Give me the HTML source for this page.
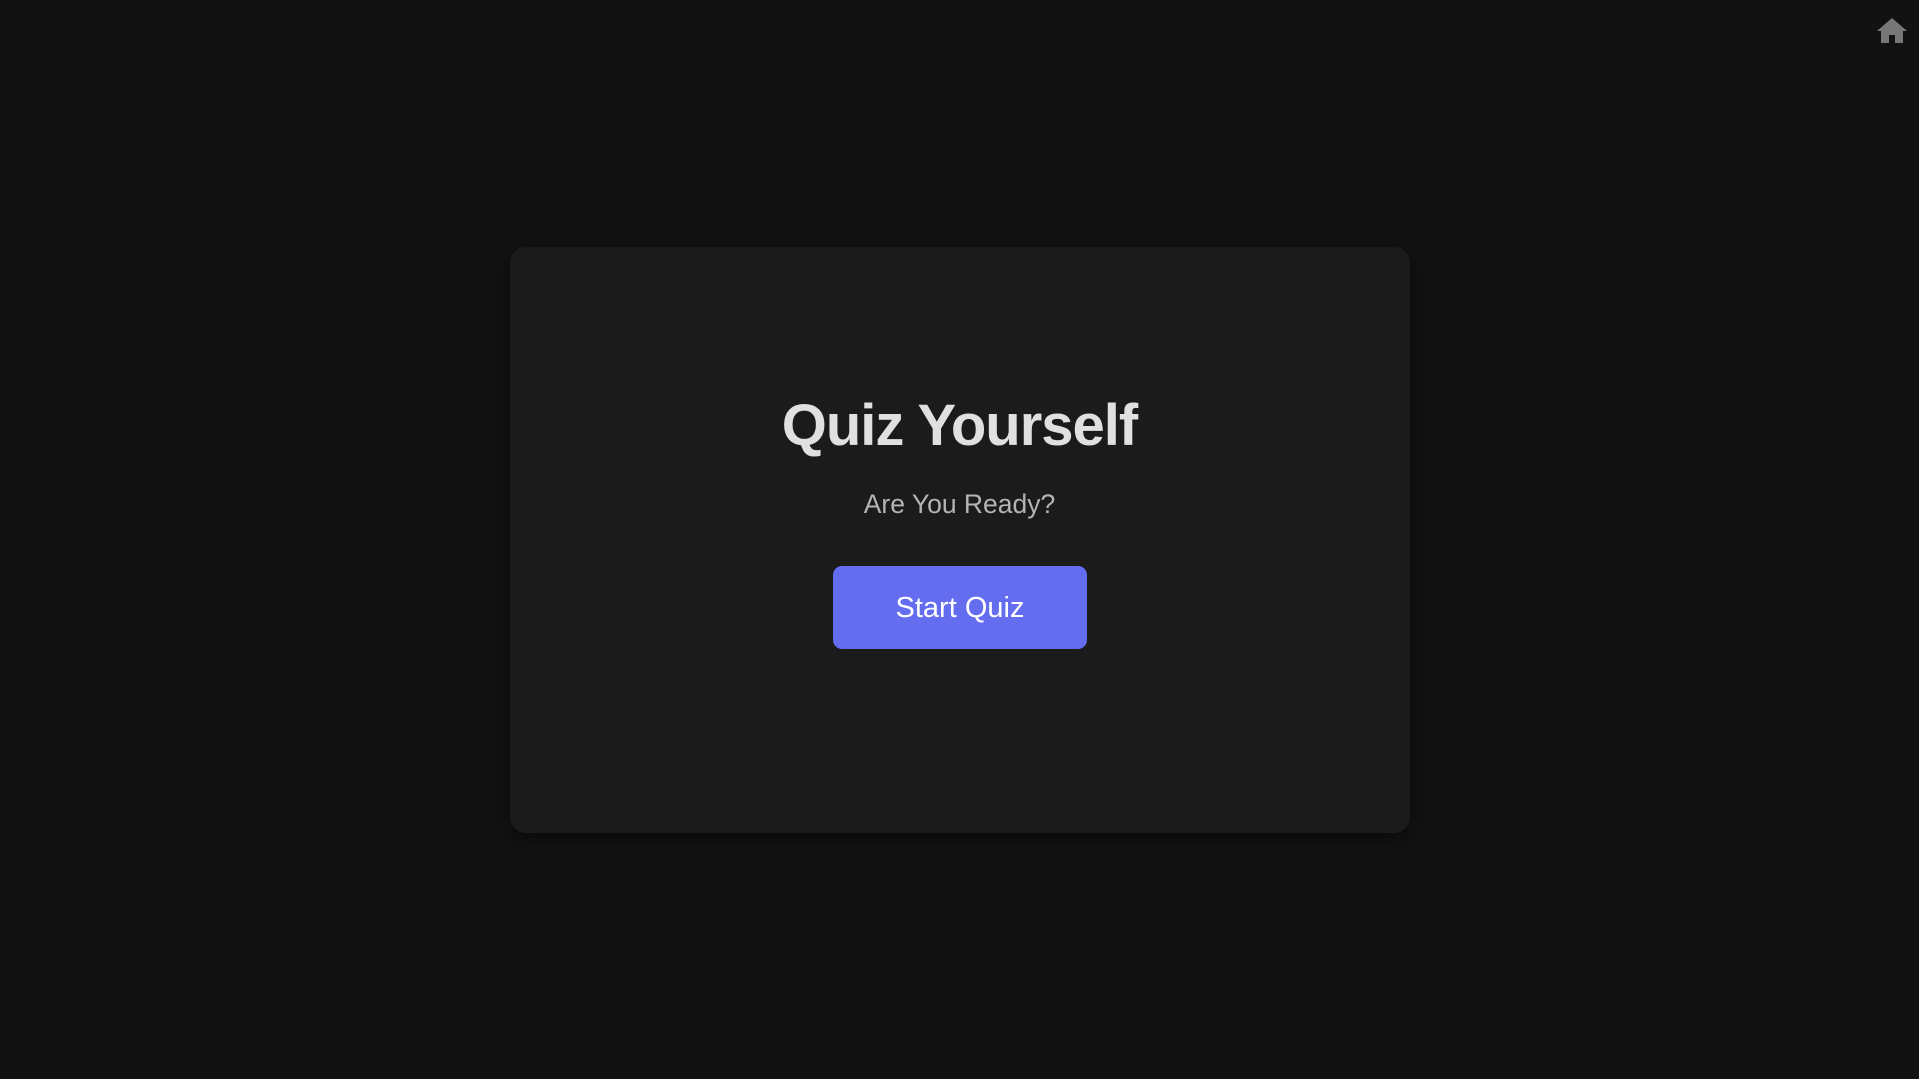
<!DOCTYPE html>
<html><head><meta charset="utf-8"><style>
html,body{margin:0;padding:0;width:1919px;height:1079px;background:#121212;overflow:hidden;font-family:"Liberation Sans",sans-serif;}
.card{position:absolute;left:510px;top:247px;width:900px;height:586px;background:#1b1b1b;border-radius:16px;box-shadow:0 6px 20px rgba(0,0,0,0.45);}
h1{position:absolute;left:0;right:0;top:388px;margin:0;text-align:center;color:#e0e0e0;font-size:58px;font-weight:bold;letter-spacing:-1px;line-height:76px;}
.sub{position:absolute;left:0;right:0;top:488px;text-align:center;color:#b4b4b4;font-size:26.5px;line-height:32px;}
.btn{position:absolute;left:833px;top:566px;width:254px;height:83px;background:#646cef;border-radius:9px;color:#fff;font-size:29px;line-height:85px;text-align:center;}
svg{position:absolute;left:1876px;top:17px;}
</style></head><body>
<svg width="32" height="27" viewBox="0 0 32 27"><path d="M16 1 L31 14 L27 14 L27 26 L19 26 L19 18 L13 18 L13 26 L5 26 L5 14 L1 14 Z" fill="#777"/></svg>
<div class="card"></div>
<h1>Quiz Yourself</h1>
<div class="sub">Are You Ready?</div>
<div class="btn">Start Quiz</div>
</body></html>
